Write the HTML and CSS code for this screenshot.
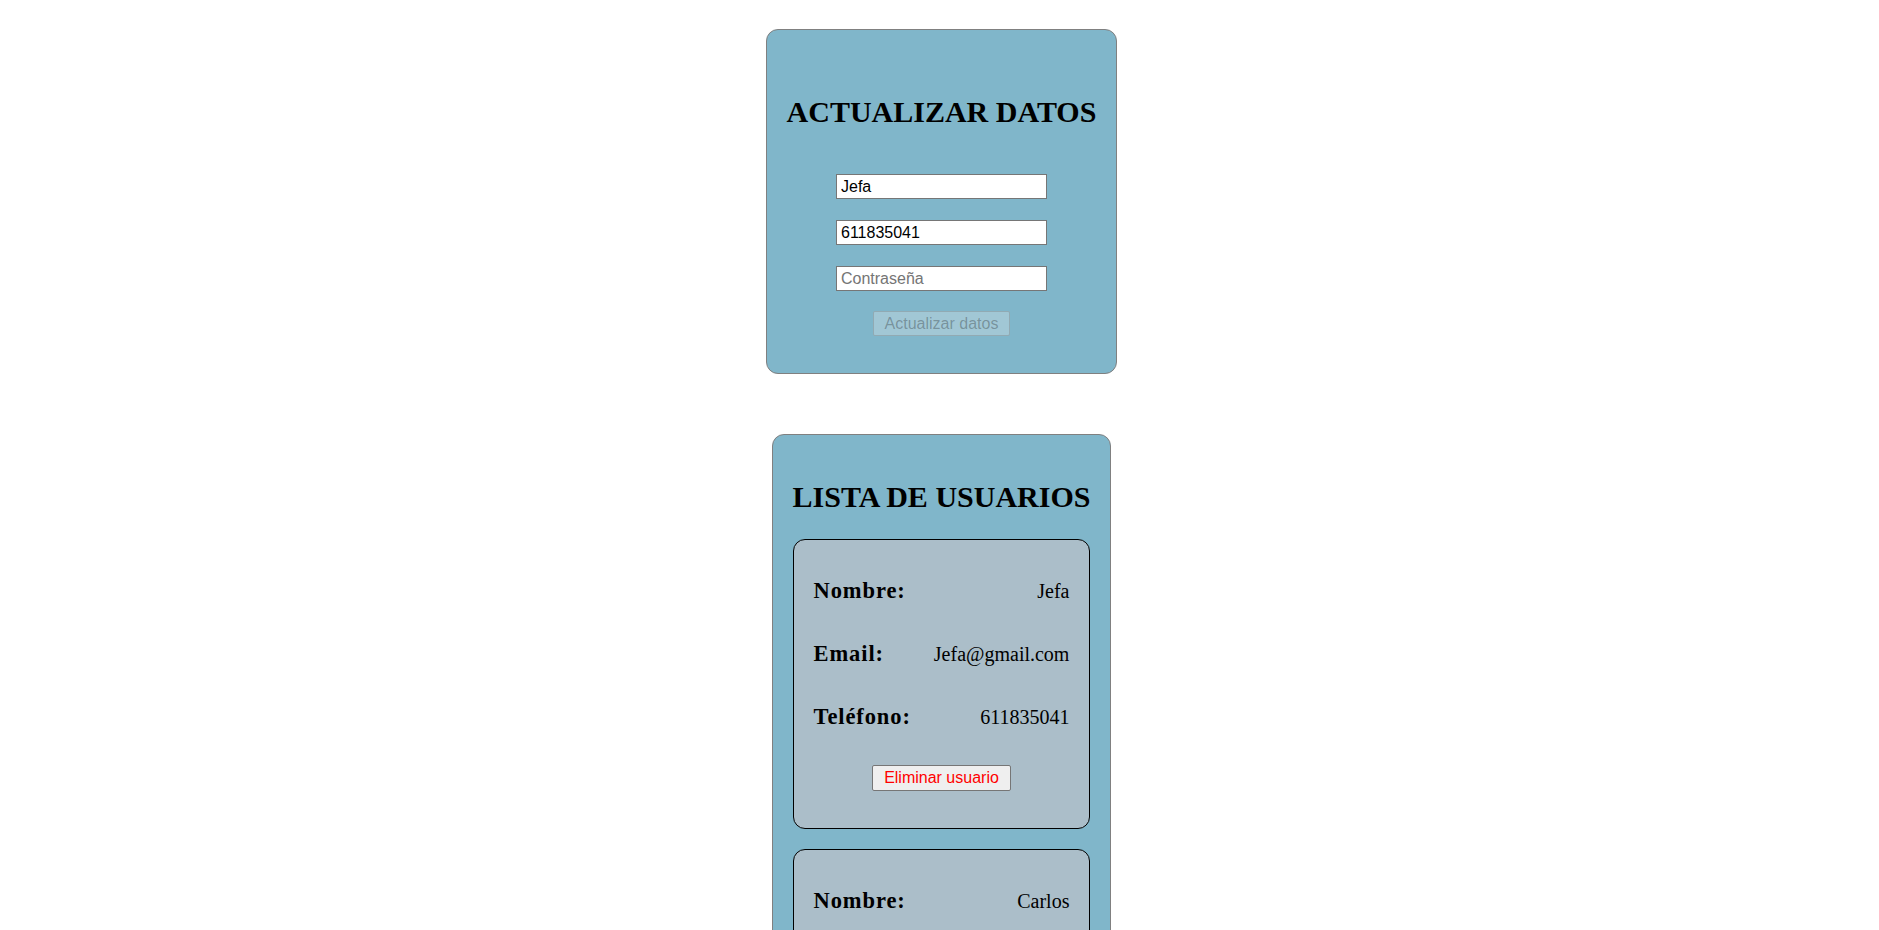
FILE: index.html
```html
<!DOCTYPE html>
<html lang="es">
<head>
<meta charset="utf-8">
<title>Usuarios</title>
<link rel="stylesheet" href="styles.css">
</head>
<body>
<main class="page">
  <form class="card card-update">
    <h1 class="card-title title-update">ACTUALIZAR DATOS</h1>
    <div class="fields">
      <input class="field" type="text" value="Jefa">
      <input class="field" type="text" value="611835041">
      <input class="field" type="password" placeholder="Contraseña">
      <button class="btn btn-disabled" type="submit" disabled>Actualizar datos</button>
    </div>
  </form>

  <section class="card card-list">
    <h1 class="card-title title-list">LISTA DE USUARIOS</h1>
    <div class="users">
      <article class="user">
        <div class="row"><span class="label">Nombre:</span><span class="value">Jefa</span></div>
        <div class="row"><span class="label">Email:</span><span class="value">Jefa@gmail.com</span></div>
        <div class="row"><span class="label">Teléfono:</span><span class="value">611835041</span></div>
        <button class="btn btn-delete" type="button">Eliminar usuario</button>
      </article>
      <article class="user">
        <div class="row"><span class="label">Nombre:</span><span class="value">Carlos</span></div>
        <div class="row"><span class="label">Email:</span><span class="value">Carlos@gmail.com</span></div>
        <div class="row"><span class="label">Teléfono:</span><span class="value">622418930</span></div>
        <button class="btn btn-delete" type="button">Eliminar usuario</button>
      </article>
    </div>
  </section>
</main>
</body>
</html>
```
FILE: styles.css
```css
html, body {
  background: #ffffff;
}

body {
  margin: 8px;
  font-family: "Liberation Serif", "Times New Roman", serif;
  color: #000000;
}

.page {
  display: flex;
  flex-direction: column;
  align-items: center;
  padding: 21px 0 40px 4px;
  gap: 60px;
}

.card {
  background: #80b6ca;
  border: 1px solid #808080;
  border-radius: 12px;
  padding: 20px;
  margin: 0;
}

.card-title {
  font-family: "Liberation Serif", "Times New Roman", serif;
  font-weight: bold;
  font-size: 30px;
  line-height: 33px;
  text-align: center;
  white-space: nowrap;
}

.title-update {
  margin: 45px 0 46px;
}

.title-list {
  margin: 25px 0 26px;
}

.fields {
  display: flex;
  flex-direction: column;
  align-items: center;
  gap: 21px;
  padding-bottom: 17px;
}

.field {
  box-sizing: border-box;
  width: 211px;
  height: 25px;
  margin: 0;
  padding: 0 4px;
  border: 1px solid #767676;
  border-radius: 0;
  background: #ffffff;
  font-family: "Liberation Sans", Arial, sans-serif;
  font-size: 16px;
  color: #000000;
  outline: none;
}

.field::placeholder {
  color: #757575;
  opacity: 1;
}

.btn {
  box-sizing: border-box;
  margin: 0;
  padding: 0 11px;
  border-radius: 2px;
  font-family: "Liberation Sans", Arial, sans-serif;
  font-size: 16px;
  line-height: 18px;
}

.btn-disabled {
  height: 25px;
  margin-top: -1px;
  background: rgba(239, 239, 239, 0.3);
  border: 1px solid rgba(118, 118, 118, 0.35);
  color: rgba(16, 16, 16, 0.3);
}

.users {
  display: flex;
  flex-direction: column;
  gap: 20px;
}

.user {
  display: flex;
  flex-direction: column;
  align-items: stretch;
  background: #abbec9;
  border: 1px solid #000000;
  border-radius: 12px;
  padding: 38px 20px 37px;
  gap: 37px;
}

.row {
  display: flex;
  justify-content: space-between;
  align-items: baseline;
  height: 26px;
  line-height: 26px;
}

.label {
  font-weight: bold;
  font-size: 22.5px;
  letter-spacing: 0.9px;
}

.value {
  font-size: 20px;
}

.btn-delete {
  align-self: center;
  height: 26px;
  margin-top: -2px;
  background: #efefef;
  border: 1px solid #767676;
  color: #ff0000;
}
```
